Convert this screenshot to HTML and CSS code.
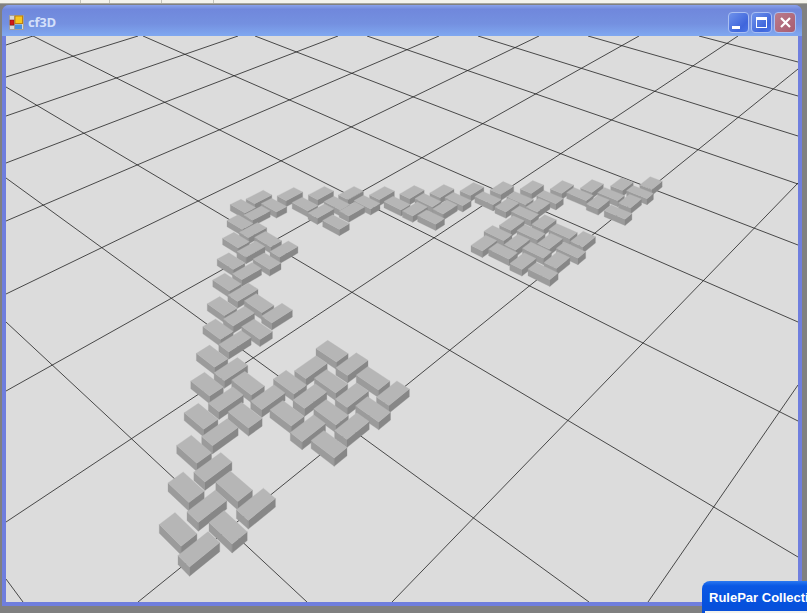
FILE: index.html
```html
<!DOCTYPE html>
<html lang="en">
<head>
<meta charset="utf-8">
<title>cf3D</title>
<link rel="stylesheet" href="styles.css">
</head>
<body>
<div class="strip"><span class="cell c1"></span><span class="cell c2"></span><span class="cell c3"></span><span class="cell c4"></span><span class="cell c5"></span></div>
<main class="window">
  <header class="titlebar">
    <svg class="appicon" width="15" height="15" viewBox="0 0 15 15">
      <rect x="0.5" y="0.5" width="14" height="14" fill="#d8d8d8" stroke="#a0a0a0"/>
      <path d="M0 5.5h6M5.5 0v15M0 10.5h6" stroke="#a0a0a0" fill="none"/>
      <rect x="1" y="5" width="4" height="5" fill="#d01818" stroke="#801010" stroke-width="0.5"/>
      <rect x="6" y="1" width="7.5" height="7.5" fill="#f8c820" stroke="#c08010"/>
      <rect x="6" y="9.5" width="7" height="4.5" fill="#4a90e0"/>
    </svg>
    <span class="title">cf3D</span>
    <div class="controls">
      <button class="btn" aria-label="Minimize"><span class="min-glyph"></span></button>
      <button class="btn" aria-label="Maximize"><span class="max-glyph"></span></button>
      <button class="btn close" aria-label="Close">
        <svg width="11" height="11" viewBox="0 0 11 11"><path d="M1 1l9 9M10 1l-9 9" stroke="#fff" stroke-width="2.2" fill="none"/></svg>
      </button>
    </div>
  </header>
  <div class="viewport">
    <svg id="scene" class="scene" width="792" height="566" viewBox="6 36 792 566" xmlns="http://www.w3.org/2000/svg"></svg>
  </div>
</main>
<aside class="otherwin">
  <div class="otherbar">RulePar Collecti</div>
  <div class="otherbody"></div>
</aside>
<script src="scene.js"></script>
</body>
</html>
```
FILE: styles.css
```css
* { box-sizing: border-box; }
html, body { margin: 0; padding: 0; }
body {
  width: 807px;
  height: 613px;
  overflow: hidden;
  background: #808080;
  position: relative;
  font-family: "Open Sans", "Liberation Sans", sans-serif;
}
.strip {
  display: flex;
  height: 4px;
  background: #f4f3ec;
  border-bottom: 1px solid #a8a8a0;
}
.cell { display: block; border-right: 1px solid #c4c4bc; height: 100%; }
.c1 { width: 81px; }
.c2 { width: 29px; }
.c3 { width: 52px; }
.c4 { width: 52px; }
.c5 { width: 1px; border: 0; }
.window {
  margin: 1px 5px 0 2px;
  width: 800px;
  height: 601px;
  display: flex;
  flex-direction: column;
  background: #6f7ede;
  border-radius: 7px 7px 0 0;
  overflow: hidden;
}
.titlebar {
  height: 31px;
  display: flex;
  align-items: center;
  padding: 3px 6px 0 7px;
  background: linear-gradient(#8aa2ea 0, #7088dc 14%, #7490e0 60%, #80a8f0 100%);
}
.appicon { flex: none; margin-right: 4px; }
.title {
  font-size: 13px;
  font-weight: 700;
  color: #d4e0fa;
  letter-spacing: -0.2px;
}
.controls { margin-left: auto; display: flex; gap: 2px; align-items: center; }
.btn {
  width: 21px;
  height: 21px;
  padding: 0;
  border: 1px solid #aabff2;
  border-radius: 4px;
  background: linear-gradient(135deg, #6f92ea, #3f66dc 70%, #4a74e6);
  position: relative;
  display: flex;
  align-items: center;
  justify-content: center;
}
.close { background: linear-gradient(135deg, #bb7c8c, #a85c70); width: 22px; }
.min-glyph {
  display: block;
  width: 8px;
  height: 3px;
  background: #fff;
  margin: 11px 5px 0 0;
}
.max-glyph {
  display: block;
  width: 11px;
  height: 11px;
  border: 1px solid #fff;
  border-top-width: 3px;
}
.viewport {
  flex: 1;
  padding: 0 4px 4px 4px;
  display: flex;
}
.scene { display: block; background: #dcdcdc; }
.grid { stroke: #222; stroke-width: 0.8; fill: none; }
.top { fill: #b6b6b6; stroke: #b6b6b6; stroke-width: 0.3; }
.sl { fill: #9b9b9b; stroke: #9b9b9b; stroke-width: 0.3; }
.sr { fill: #878787; stroke: #878787; stroke-width: 0.3; }
.otherwin {
  position: absolute;
  left: 702px;
  top: 581px;
  width: 105px;
  height: 32px;
  border-radius: 8px 0 0 0;
  background: linear-gradient(#2a78f0 0, #0a58e4 15%, #0650dc 80%, #0a50d8 100%);
  padding: 0 0 0 3px;
  overflow: hidden;
}
.otherbar {
  height: 30px;
  padding: 8px 0 0 4px;
  font-family: "Liberation Sans", Arial, sans-serif;
  font-size: 13px;
  line-height: 18px;
  font-weight: 700;
  color: #fff;
  white-space: nowrap;
}
.otherbody { height: 2px; background: #f2f2ec; }
```
FILE: scene.js
```js
// Ground-plane homography fitted to four grid crossings: [p, q] -> [x, y]
var pairs = [[1,2,73,56],[-4,9,774,89],[2,11,713,507],[4,8,131,438]];

function solve(A, b) {
  var n = b.length;
  for (var i = 0; i < n; i++) {
    var m = i;
    for (var r = i + 1; r < n; r++) if (Math.abs(A[r][i]) > Math.abs(A[m][i])) m = r;
    var t = A[i]; A[i] = A[m]; A[m] = t;
    var s = b[i]; b[i] = b[m]; b[m] = s;
    for (var k = i + 1; k < n; k++) {
      var f = A[k][i] / A[i][i];
      for (var c = i; c < n; c++) A[k][c] -= f * A[i][c];
      b[k] -= f * b[i];
    }
  }
  var x = new Array(n);
  for (var i2 = n - 1; i2 >= 0; i2--) {
    var v = b[i2];
    for (var c2 = i2 + 1; c2 < n; c2++) v -= A[i2][c2] * x[c2];
    x[i2] = v / A[i2][i2];
  }
  return x;
}

var M = [], R = [];
pairs.forEach(function (e) {
  var p = e[0], q = e[1], x = e[2], y = e[3];
  M.push([p, q, 1, 0, 0, 0, -p * x, -q * x]); R.push(x);
  M.push([0, 0, 0, p, q, 1, -p * y, -q * y]); R.push(y);
});
var h = solve(M, R);
h.push(1);

function project(p, q) {
  var w = h[6] * p + h[7] * q + h[8];
  return [(h[0] * p + h[1] * q + h[2]) / w, (h[3] * p + h[4] * q + h[5]) / w];
}
function unproject(x, y) {
  return solve(
    [[h[0] - x * h[6], h[1] - x * h[7]], [h[3] - y * h[6], h[4] - y * h[7]]],
    [x * h[8] - h[2], y * h[8] - h[5]]
  );
}

var lines = [
  [33,36,798,421],[143,36,798,322],[255,36,798,245],[367,36,798,184],[478,36,798,136],
  [588,36,798,96],[699,36,798,62],[6,87,798,557],[6,178,589,602],[6,322,307,602],[6,579,23,602],
  [6,45,33,36],[6,77,138,36],[6,116,238,36],[6,163,338,36],[6,221,439,36],[6,294,539,36],
  [6,391,639,36],[6,522,738,36],[138,602,798,69],[392,602,798,183],[648,602,798,385]
];

var blocks = [
  "a199,549","b178,529","b228,527","a256,504","a207,506","b186,487","b234,486","a213,467","b194,449",
  "a220,432","b201,416","b245,415","a226,399","b207,384","b248,383","a231,369","b212,356","a235,341",
  "a268,397","b287,413","b290,382","a310,396","a308,428","b329,444","a352,426","b331,412","a352,395",
  "b373,409","b331,381","a311,367","b332,351","a352,364","b373,378","a393,393",
  "b218,329","a239,316","b257,329","b222,306","b259,303","a277,313","a243,292","b227,282","a247,271",
  "b267,261","b231,261","a251,249","a284,249","b236,240","b268,239","a253,230","b240,222","a257,213",
  "b243,206","a259,197","b274,205","a290,194","b305,204","a321,193","a321,211","b336,222","b337,203",
  "a352,209","a351,193","b367,202","a382,193","b397,203",
  "a412,192","b428,200","a415,209","a445,207","b431,217","a442,191","b458,199","a472,189","b488,198",
  "a502,188","b520,198","a507,205","a532,187","a538,205","b550,197","a562,187","b580,194","a592,186",
  "b611,194","a598,202","b618,212","a630,201","a622,184","b640,192","a651,183",
  "b525,213","a512,223","a544,222","b498,233","b531,232","b563,231","a484,243","a517,242","a550,241",
  "a583,239","b503,251","b537,250","b571,250","a523,261","a557,260","b543,271"
];

var svg = document.getElementById("scene");
var NS = "http://www.w3.org/2000/svg";

function poly(points, cls) {
  var el = document.createElementNS(NS, "polygon");
  el.setAttribute("class", cls);
  el.setAttribute("points", points.map(function (p) { return p[0].toFixed(1) + "," + p[1].toFixed(1); }).join(" "));
  svg.appendChild(el);
}

lines.forEach(function (l) {
  var el = document.createElementNS(NS, "line");
  el.setAttribute("class", "grid");
  el.setAttribute("x1", l[0]); el.setAttribute("y1", l[1]);
  el.setAttribute("x2", l[2]); el.setAttribute("y2", l[3]);
  svg.appendChild(el);
});

blocks.map(function (s) {
  var xy = s.slice(1).split(",").map(Number);
  return { t: s[0], x: xy[0], y: xy[1] };
}).sort(function (a, b) { return a.y - b.y; }).forEach(function (b) {
  var c = unproject(b.x, b.y);
  var d = b.y - 190;
  var shortSide = 0.125 - d * 0.00005;
  var dp = (b.t === "a" ? 0.205 : shortSide) / 2;
  var dq = (b.t === "a" ? shortSide : 0.212) / 2;
  var top = [
    project(c[0] - dp, c[1] - dq), project(c[0] + dp, c[1] - dq),
    project(c[0] + dp, c[1] + dq), project(c[0] - dp, c[1] + dq)
  ];
  var H = 6 + d * 0.0085;
  var left = top[0], right = top[0], low = top[0];
  top.forEach(function (p) {
    if (p[0] < left[0]) left = p;
    if (p[0] > right[0]) right = p;
    if (p[1] > low[1]) low = p;
  });
  function down(p) { return [p[0], p[1] + H]; }
  if (low !== left) poly([left, low, down(low), down(left)], "sl");
  if (low !== right) poly([low, right, down(right), down(low)], "sr");
  poly(top, "top");
});
```
